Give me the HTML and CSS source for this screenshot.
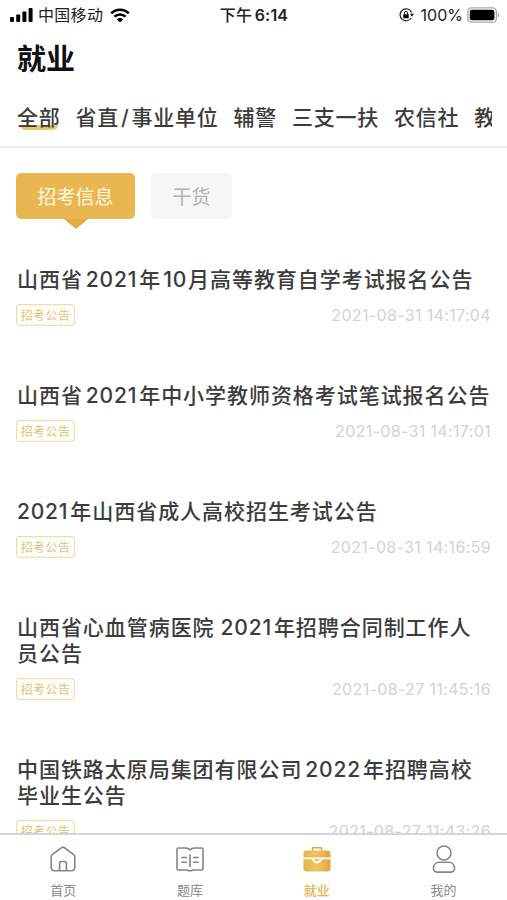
FILE: index.html
```html
<!DOCTYPE html>
<html lang="zh-CN">
<head>
<meta charset="utf-8">
<title>就业</title>
<link rel="stylesheet" href="styles.css">
</head>
<body>
<div class="app">
  <header class="status">
    <div class="status-left">
      <svg class="signal" width="23" height="14" viewBox="0 0 23 14"><rect x="0" y="9" width="4" height="5" rx="1"/><rect x="6.2" y="6.5" width="4" height="7.5" rx="1"/><rect x="12.4" y="3.5" width="4" height="10.5" rx="1"/><rect x="18.6" y="0" width="4" height="14" rx="1"/></svg>
      <span class="carrier">中国移动</span>
      <svg class="wifi" width="20" height="15" viewBox="0 0 20 15"><path d="M1.2 5.3a12.6 12.6 0 0 1 17.6 0M4.4 8.7a8 8 0 0 1 11.2 0" fill="none" stroke="#000" stroke-width="2.5"/><path d="M10 14.6 6.8 11.3a4.6 4.6 0 0 1 6.4 0z"/></svg>
    </div>
    <div class="clock">下午 <b>6:14</b></div>
    <div class="status-right">
      <svg width="15" height="14" viewBox="0 0 15 14"><path d="M12.6 4.4A6 6 0 1 0 12.2 10" fill="none" stroke="#222" stroke-width="1.2"/><path d="M11.1 5.8h3.8L13 8.8z"/><rect x="4.3" y="6.2" width="5.4" height="4.1" rx=".6"/><path d="M5.4 6.5V5a1.6 1.6 0 0 1 3.2 0v1.5" fill="none" stroke="#222"/></svg>
      <span class="percent">100%</span>
      <svg width="33" height="16" viewBox="0 0 33 16"><rect x=".8" y=".8" width="28.6" height="14.4" rx="4" fill="#fff" stroke="#a6a6a6" stroke-width="1.3"/><rect x="2.8" y="2.8" width="24.6" height="10.4" rx="2"/><path d="M30.9 5.7c1.7.8 1.7 3.8 0 4.6z" fill="#a6a6a6"/></svg>
    </div>
  </header>
  <h1>就业</h1>
  <nav class="cats"><div class="cats-row">
    <span class="cat on">全部</span><span class="cat">省直<i>/</i>事业单位</span><span class="cat">辅警</span><span class="cat">三支一扶</span><span class="cat">农信社</span><span class="cat">教</span>
  </div></nav>
  <div class="pills"><span class="pill active">招考信息</span><span class="pill">干货</span></div>
  <main class="list">
    <article><h2>山西省<span class="n">2021</span>年<span class="n month">10</span>月高等教育自学考试报名公告</h2><div class="meta"><span class="tag">招考公告</span><time>2021-08-31 14:17:04</time></div></article>
    <article><h2>山西省<span class="n">2021</span>年中小学教师资格考试笔试报名公告</h2><div class="meta"><span class="tag">招考公告</span><time>2021-08-31 14:17:01</time></div></article>
    <article><h2><span class="n first">2021</span>年山西省成人高校招生考试公告</h2><div class="meta"><span class="tag">招考公告</span><time>2021-08-31 14:16:59</time></div></article>
    <article><h2>山西省心血管病医院<span class="n wide">2021</span>年招聘合同制工作人<br>员公告</h2><div class="meta"><span class="tag">招考公告</span><time>2021-08-27 11:45:16</time></div></article>
    <article><h2>中国铁路太原局集团有限公司<span class="n">2022</span>年招聘高校<br>毕业生公告</h2><div class="meta"><span class="tag">招考公告</span><time>2021-08-27 11:43:26</time></div></article>
  </main>
  <footer class="tabs">
    <div class="tab"><svg width="28" height="28" viewBox="0 0 28 28" fill="none" stroke="#858585" stroke-width="1.6" stroke-linejoin="round"><path d="M3.2 9.6 12.7 2.6q1.3-1 2.6 0l9.500 7q1 .8 1 2v11.200a3 3 0 0 1-3 3H5.200a3 3 0 0 1-3-3V11.600q0-1.200 1-2z"/><path d="M10.600 25.800v-7.300a2 2 0 0 1 2-2h2.800a2 2 0 0 1 2 2v7.300"/></svg><span>首页</span></div>
    <div class="tab"><svg width="28" height="28" viewBox="0 0 28 28" fill="none" stroke="#858585" stroke-width="1.6" stroke-linecap="round" stroke-linejoin="round"><path d="M14 4.900C12.800 3.300 11.500 3 9.500 3H2.500Q1 3 1 4.500v19Q1 25 2.500 25h8.200q1.300 0 1.800.8h3q.5-.8 1.800-.8h8.200q1.500 0 1.500-1.500v-19Q27 3 25.500 3h-7c-2 0-3.300.3-4.500 1.900zM14 10v11.500M6 12.500h4.500M6 17.200h4.500M17.500 12.500H22M17.500 17.200H22"/></svg><span>题库</span></div>
    <div class="tab current"><svg width="28" height="28" viewBox="0 0 28 28"><defs><linearGradient id="gold" x1="0" x2="1"><stop offset="0" stop-color="#e4b64d"/><stop offset=".5" stop-color="#efc45e"/><stop offset="1" stop-color="#e2a53b"/></linearGradient></defs><path d="M9.500 6V2.700h9V6" fill="none" stroke="#dfaa42" stroke-width="1.500"/><path d="M3.500 5.600h21a3 3 0 0 1 3 3v3.900H.5V8.600a3 3 0 0 1 3-3z" fill="url(#gold)"/><path d="M.5 14.300h8.700c.7 2.600 2.300 4.100 4.800 4.100s4.100-1.500 4.800-4.100h8.700v9.200a3 3 0 0 1-3 3h-21a3 3 0 0 1-3-3z" fill="url(#gold)"/><path d="M11.500 14h5c-.4 1.500-1.200 2.200-2.500 2.200s-2.100-.7-2.500-2.200z" fill="#e7b64f"/></svg><span>就业</span></div>
    <div class="tab"><svg width="28" height="28" viewBox="0 0 28 28" fill="none" stroke="#858585" stroke-width="1.6"><circle cx="14" cy="8" r="7"/><path d="M9.500 17.300h9c3.800 0 6 2.600 6 5.800 0 2.900-1.300 4-3.800 4H7.300c-2.500 0-3.800-1.100-3.800-4 0-3.200 2.200-5.800 6-5.800z"/></svg><span>我的</span></div>
  </footer>
</div>
</body>
</html>
```

FILE: styles.css
```css
* { box-sizing: border-box; }
body { margin: 0; background: #fefefe; font-family: Inter, "Noto Sans CJK SC", sans-serif; color: #3c3c3c; }
.app { width: 507px; height: 900px; display: flex; flex-direction: column; overflow: hidden; white-space: nowrap; }
.status { height: 30px; flex: none; display: grid; grid-template-columns: 1fr auto 1fr; align-items: center; padding: 0 7px 0 10px; color: #222; }
.status svg { flex: none; display: block; }
.status-left, .status-right { display: flex; align-items: center; }
.status-right { justify-content: flex-end; }
.carrier { font-size: 16px; letter-spacing: .3px; margin: 0 7px 0 5px; line-height: 30px; }
.clock { font-size: 16px; font-weight: 500; line-height: 30px; margin-left: -2px; letter-spacing: .2px; }
.clock b { font-weight: 600; margin-left: -2px; }
.percent { font-size: 16px; margin: 0 4px 0 7px; }
h1 { margin: 10px 0 0 17px; height: 38px; flex: none; font-size: 29px; line-height: 40px; font-weight: 700; color: #111; }
.cats { flex: none; height: 70px; padding: 20px 15px 0 17px; border-bottom: 2px solid #efefef; }
.cats-row { display: flex; gap: 15px; overflow: hidden; height: 40px; }
.cat { flex: none; position: relative; font-size: 21px; line-height: 40px; letter-spacing: .75px; font-weight: 500; }
.cat i { font-style: normal; margin: 0 2px; }
.cat.on { z-index: 0; }
.cat.on::after { content: ""; position: absolute; z-index: -1; left: 3px; right: 3px; bottom: 8px; height: 5px; border-radius: 0 0 5px 5px; background: #ecc56b; }
.pills { flex: none; display: flex; gap: 16px; padding: 25px 0 0 16px; }
.pill { position: relative; width: 81px; height: 46px; border-radius: 5px; background: #f6f6f6; color: #b2b2b2; font-size: 19px; line-height: 49px; text-align: center; }
.pill.active { width: 119px; background: #e9b751; color: #fff9e7; }
.pill.active::after { content: ""; position: absolute; left: 48px; top: 46px; border: 12px solid transparent; border-top: 10px solid #e5ad3f; border-bottom: 0; }
.list { flex: 1; min-height: 0; overflow: hidden; padding: 48px 16px 0 17px; }
article { margin-bottom: 56px; }
h2 { margin: 0; font-size: 21px; line-height: 26px; letter-spacing: .95px; font-weight: 500; }
.n { margin: 0 2px 0 3px; letter-spacing: .8px; }
.n.month { margin: 0 1px 0 2px; }
.n.first { margin-left: 0; }
.n.wide { margin-left: 6px; }
.meta { display: flex; justify-content: space-between; margin-top: 11px; height: 23px; }
.tag { width: 59px; height: 22px; border: 1px solid #ebdfab; box-shadow: inset 0 0 0 1px #faf6e3; border-radius: 3px; text-align: center; font-size: 12px; line-height: 21px; color: #dfc275; letter-spacing: .4px; margin-left: -1px; }
time { font-size: 16px; line-height: 23px; color: #d3d3d3; font-weight: 400; letter-spacing: .35px; }
.tabs { flex: none; height: 67px; display: grid; grid-template-columns: repeat(4, 1fr); border-top: 2px solid #d5d5d5; background: #fefefe; }
.tab { display: flex; flex-direction: column; align-items: center; padding-top: 10px; font-size: 13px; line-height: 18px; color: #8b8b8b; }
.tab svg { display: block; margin-bottom: 8px; }
.current { color: #e3b34e; font-weight: 500; }
```
